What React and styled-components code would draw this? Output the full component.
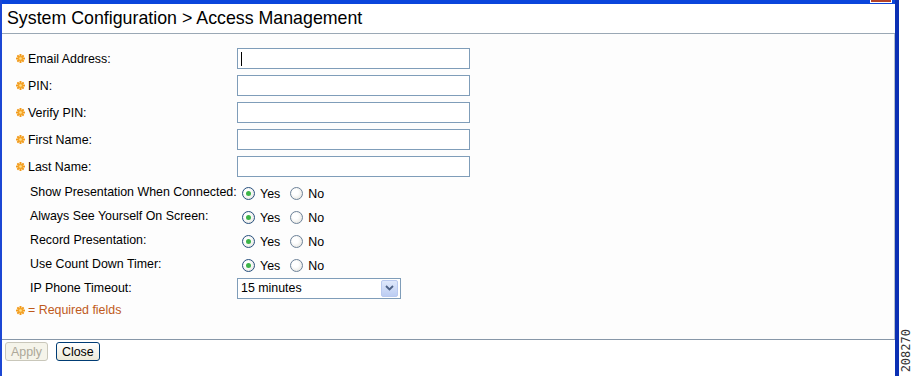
import React, { useState } from "react";
import styled, { createGlobalStyle } from "styled-components";

const GlobalStyle = createGlobalStyle`
  html, body { margin: 0; padding: 0; background: #ffffff; }
  body { font-family: "Liberation Sans", Arial, sans-serif; }
`;

const textFields = [
  { id: "email", label: "Email Address:", focused: true },
  { id: "pin", label: "PIN:" },
  { id: "verify", label: "Verify PIN:" },
  { id: "first", label: "First Name:" },
  { id: "last", label: "Last Name:" },
];

const radioFields = [
  "Show Presentation When Connected:",
  "Always See Yourself On Screen:",
  "Record Presentation:",
  "Use Count Down Timer:",
];

function Star() {
  return (
    <svg width="9" height="9" viewBox="0 0 18 18">
      <g fill="#f29a1a">
        {[0, 45, 90, 135, 180, 225, 270, 315].map((a) => (
          <rect key={a} x="7" y="0" width="4" height="6" rx="1" transform={`rotate(${a} 9 9)`} />
        ))}
      </g>
      <circle cx="9" cy="9" r="5.5" fill="#f5a52a" />
      <circle cx="9" cy="9" r="2.6" fill="#ffe08a" />
    </svg>
  );
}

function App() {
  const [choices, setChoices] = useState(radioFields.map(() => "yes"));

  const pick = (i, v) =>
    setChoices((c) => c.map((x, j) => (j === i ? v : x)));

  return (
    <Screen>
      <GlobalStyle />
      <Frame>
        <TopStrip>
          <CloseStub />
        </TopStrip>
        <TitleBar>System Configuration &gt; Access Management</TitleBar>
        <Panel>
          {textFields.map((f) => (
            <InputRow key={f.id}>
              <Label>
                <Star />
                <span>{f.label}</span>
              </Label>
              <TextBox>{f.focused && <Caret />}</TextBox>
            </InputRow>
          ))}
          {radioFields.map((label, i) => (
            <RadioRow key={label}>
              <Label $indent>{label}</Label>
              <RadioGroup>
                <Choice onClick={() => pick(i, "yes")}>
                  <Radio $on={choices[i] === "yes"} />
                  Yes
                </Choice>
                <Choice onClick={() => pick(i, "no")}>
                  <Radio $on={choices[i] === "no"} />
                  No
                </Choice>
              </RadioGroup>
            </RadioRow>
          ))}
          <RadioRow>
            <Label $indent>IP Phone Timeout:</Label>
            <Select>
              <span>15 minutes</span>
              <Arrow>
                <svg width="9" height="6" viewBox="0 0 9 6">
                  <path d="M1 1 L4.5 4.5 L8 1" fill="none" stroke="#4d6185" strokeWidth="1.8" />
                </svg>
              </Arrow>
            </Select>
          </RadioRow>
          <Note>
            <Star />
            <span>= Required fields</span>
          </Note>
        </Panel>
        <Footer>
          <Button disabled>Apply</Button>
          <Button>Close</Button>
        </Footer>
      </Frame>
      <Side>
        <FigureId>208270</FigureId>
      </Side>
    </Screen>
  );
}

export default App;

const Screen = styled.div`
  width: 913px;
  height: 376px;
  display: flex;
  overflow: hidden;
`;

const Frame = styled.div`
  width: 895px;
  display: flex;
  flex-direction: column;
  border-left: 2px solid #1c47d4;
  border-right: 4px solid #0b30b4;
  background: #ffffff;
`;

const TopStrip = styled.div`
  height: 4px;
  background: #0a45dc;
  display: flex;
  justify-content: flex-end;
  padding-right: 3px;
`;

const CloseStub = styled.div`
  width: 20px;
  height: 2px;
  background: #b3422a;
  border: 1px solid #ffffff;
  border-top: none;
`;

const TitleBar = styled.div`
  height: 29px;
  display: flex;
  align-items: center;
  padding-left: 5px;
  font-size: 17.8px;
  color: #000000;
  border-bottom: 1px solid #9aa8b5;
`;

const Panel = styled.div`
  flex: 1;
  background: #fdfdfd;
  padding: 11px 0 0 14px;
  border-right: 1px solid #b6c1cc;
`;

const InputRow = styled.div`
  height: 27px;
  display: grid;
  grid-template-columns: 221px 233px;
  align-items: center;
`;

const RadioRow = styled.div`
  height: 24px;
  display: grid;
  grid-template-columns: 221px auto;
  align-items: center;
`;

const Label = styled.div`
  display: flex;
  align-items: center;
  gap: 3px;
  padding-left: ${(p) => (p.$indent ? "14px" : "0")};
  font-size: 12.4px;
  color: #000000;
  white-space: nowrap;
`;

const TextBox = styled.div`
  height: 19px;
  border: 1px solid #7f9db9;
  background: #ffffff;
  display: flex;
  align-items: center;
  padding-left: 3px;
`;

const Caret = styled.div`
  width: 1px;
  height: 14px;
  background: #000000;
`;

const RadioGroup = styled.div`
  display: flex;
  align-items: center;
  gap: 10px;
  padding-left: 5px;
  padding-top: 3px;
`;

const Choice = styled.label`
  display: flex;
  align-items: center;
  gap: 5px;
  font-size: 12.4px;
  color: #000000;
  cursor: pointer;
`;

const Radio = styled.span`
  width: 11px;
  height: 11px;
  border-radius: 50%;
  border: 1px solid ${(p) => (p.$on ? "#27507e" : "#6d8299")};
  background: radial-gradient(circle at 40% 40%, #ffffff 30%, #dcdcd6 100%);
  display: flex;
  align-items: center;
  justify-content: center;

  &::after {
    content: "";
    width: 5px;
    height: 5px;
    border-radius: 50%;
    background: ${(p) => (p.$on ? "#3db449" : "transparent")};
  }
`;

const Select = styled.div`
  width: 159px;
  height: 19px;
  border: 1px solid #7f9db9;
  background: #ffffff;
  display: flex;
  align-items: center;
  justify-content: space-between;
  padding-left: 3px;
  font-size: 12.4px;
  color: #000000;
`;

const Arrow = styled.div`
  width: 15px;
  height: 15px;
  margin-right: 2px;
  border: 1px solid #b9c9ef;
  border-radius: 2px;
  background: linear-gradient(#dfe8fb, #bccdf3);
  display: flex;
  align-items: center;
  justify-content: center;
`;

const Note = styled.div`
  height: 20px;
  display: flex;
  align-items: center;
  gap: 3px;
  font-size: 12.4px;
  color: #bf5a1c;
`;

const Footer = styled.div`
  height: 34px;
  border-top: 1px solid #8797a8;
  display: flex;
  align-items: flex-start;
  gap: 8px;
  padding: 2px 0 0 3px;
`;

const Button = styled.button`
  height: 19px;
  padding: 0 5px;
  font-family: "Liberation Sans", Arial, sans-serif;
  font-size: 12.4px;
  border-radius: 3px;
  border: 1px solid #003c74;
  color: #000000;
  background: linear-gradient(#ffffff, #ece9d8);
  cursor: pointer;

  &:disabled {
    border-color: #c9c7ba;
    color: #aca899;
    background: #f5f4ea;
    cursor: default;
  }
`;

const Side = styled.div`
  flex: 1;
  display: flex;
  align-items: flex-end;
  justify-content: center;
  padding-bottom: 4px;
`;

const FigureId = styled.div`
  writing-mode: vertical-rl;
  transform: rotate(180deg);
  font-family: "DejaVu Sans Mono", monospace;
  font-size: 12px;
  color: #333333;
`;
